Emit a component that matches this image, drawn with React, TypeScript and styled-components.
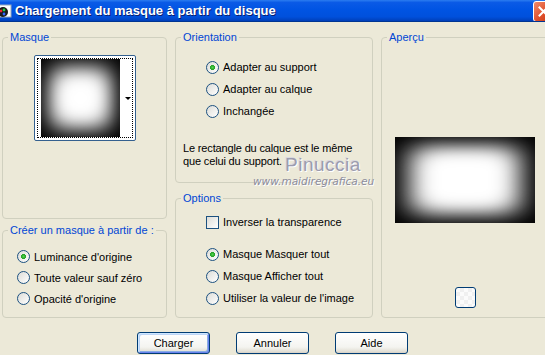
import styled, { createGlobalStyle } from "styled-components";

const GlobalStyle = createGlobalStyle`
    html, body {
        margin: 0;
        padding: 0;
        background: #ece9d8;
    }
    body {
        font-family: "Liberation Sans", Arial, sans-serif;
        font-size: 11px;
        color: #000;
    }
`;

const radioOptions = {
    creer: ["Luminance d'origine", "Toute valeur sauf zéro", "Opacité d'origine"],
    orientation: ["Adapter au support", "Adapter au calque", "Inchangée"],
    options: ["Masque Masquer tout", "Masque Afficher tout", "Utiliser la valeur de l'image"],
};

const Radio = ({ label, checked, rowHeight }: { label: string; checked?: boolean; rowHeight: number }) => (
    <OptionRow rowHeight={rowHeight}>
        <RadioCircle checked={!!checked} />
        <span>{label}</span>
    </OptionRow>
);

const App = () => {
    return (
        <>
            <GlobalStyle />
            <Dialog>
                <TitleBar>
                    <TitleLeft>
                        <svg width="14" height="14" viewBox="0 0 14 14">
                            <rect x="1" y="1" width="12" height="12" fill="#fff" stroke="#9ab" />
                            <circle cx="5" cy="8" r="5" fill="#1a1a1a" />
                            <circle cx="3" cy="7" r="1.4" fill="#e23" />
                            <circle cx="6" cy="6" r="1.4" fill="#2c4" />
                            <circle cx="6" cy="10" r="1.4" fill="#36f" />
                        </svg>
                        <Title>Chargement du masque à partir du disque</Title>
                    </TitleLeft>
                    <CloseButton>
                        <svg width="11" height="11" viewBox="0 0 11 11">
                            <path d="M1.5 1.5 L9.5 9.5 M9.5 1.5 L1.5 9.5" stroke="#fff" strokeWidth="2" strokeLinecap="square" />
                        </svg>
                    </CloseButton>
                </TitleBar>

                <Body>
                    <Columns>
                        <Column width={165} gap={5}>
                            <Group height={188}>
                                <Legend>Masque</Legend>
                                <MaskContent>
                                    <Combo>
                                        <FocusRing>
                                            <svg width="79" height="78" viewBox="0 0 79 78">
                                                <defs>
                                                    <filter id="thumbBlur" x="-50%" y="-50%" width="200%" height="200%">
                                                        <feGaussianBlur stdDeviation="11" />
                                                    </filter>
                                                </defs>
                                                <rect width="79" height="78" fill="#000" />
                                                <rect x="10" y="10" width="59" height="58" fill="#fff" filter="url(#thumbBlur)" />
                                                <rect x="20" y="20" width="39" height="38" fill="#fff" filter="url(#thumbBlur)" />
                                            </svg>
                                            <ArrowArea>
                                                <Arrow />
                                            </ArrowArea>
                                        </FocusRing>
                                    </Combo>
                                </MaskContent>
                            </Group>
                            <Group height={94}>
                                <Legend>Créer un masque à partir de :</Legend>
                                <List padTop={9} padLeft={14}>
                                    {radioOptions.creer.map((o, i) => (
                                        <Radio key={o} label={o} checked={i === 0} rowHeight={21} />
                                    ))}
                                </List>
                            </Group>
                        </Column>

                        <Column width={198} gap={9}>
                            <Group height={152}>
                                <Legend>Orientation</Legend>
                                <List padTop={12} padLeft={30}>
                                    {radioOptions.orientation.map((o, i) => (
                                        <Radio key={o} label={o} checked={i === 0} rowHeight={22} />
                                    ))}
                                </List>
                                <Note>
                                    Le rectangle du calque est le même
                                    <br />
                                    que celui du support.
                                </Note>
                            </Group>
                            <Group height={126}>
                                <Legend>Options</Legend>
                                <List padTop={6} padLeft={30}>
                                    <OptionRow rowHeight={22}>
                                        <CheckBox />
                                        <span>Inverser la transparence</span>
                                    </OptionRow>
                                    <Spacer />
                                    {radioOptions.options.map((o, i) => (
                                        <Radio key={o} label={o} checked={i === 0} rowHeight={22} />
                                    ))}
                                </List>
                            </Group>
                        </Column>

                        <Column width={168} gap={0}>
                            <Group height={287}>
                                <Legend>Aperçu</Legend>
                                <PreviewContent>
                                    <svg width="140" height="86" viewBox="0 0 140 86">
                                        <defs>
                                            <filter id="prevBlur" x="-50%" y="-50%" width="200%" height="200%">
                                                <feGaussianBlur stdDeviation="15 10" />
                                            </filter>
                                        </defs>
                                        <rect width="140" height="86" fill="#000" />
                                        <rect x="16" y="10" width="108" height="66" fill="#fff" filter="url(#prevBlur)" />
                                        <rect x="34" y="20" width="72" height="46" fill="#fff" filter="url(#prevBlur)" />
                                    </svg>
                                    <SmallButton />
                                </PreviewContent>
                            </Group>
                        </Column>
                    </Columns>

                    <ButtonRow>
                        <Button isDefault>Charger</Button>
                        <Button>Annuler</Button>
                        <Button>Aide</Button>
                    </ButtonRow>

                    <Watermark>
                        <WatermarkName>Pinuccia</WatermarkName>
                        <WatermarkUrl>www.maidiregrafica.eu</WatermarkUrl>
                    </Watermark>
                </Body>
            </Dialog>
        </>
    );
};

const Dialog = styled.div`
    width: 545px;
    height: 355px;
    overflow: hidden;
    background: #ece9d8;
    position: relative;
`;

const TitleBar = styled.div`
    height: 22px;
    box-sizing: border-box;
    display: flex;
    align-items: center;
    justify-content: space-between;
    background: linear-gradient(#2b7cf0 0%, #0a5ae6 12%, #0054e3 45%, #0050dc 80%, #003fb8 100%);
    border-bottom: 1px solid #003592;
    overflow: hidden;
`;

const TitleLeft = styled.div`
    display: flex;
    align-items: center;
    gap: 3px;
    margin-left: -2px;
`;

const Title = styled.span`
    color: #fff;
    font-family: "Liberation Sans", Arial, sans-serif;
    font-weight: bold;
    font-size: 13px;
    text-shadow: 1px 1px 0 #0a1e6e;
`;

const CloseButton = styled.div`
    width: 21px;
    height: 21px;
    box-sizing: border-box;
    margin-right: -9px;
    margin-top: 1px;
    border: 1px solid #fff;
    border-radius: 3px;
    background: linear-gradient(135deg, #f08a6c, #e0502c 55%, #c43a16);
    display: flex;
    align-items: center;
    justify-content: center;
`;

const Body = styled.div`
    padding: 9px 0 0 2px;
`;

const Columns = styled.div`
    display: flex;
    gap: 8px;
`;

const Column = styled.div<{ width: number; gap: number }>`
    flex: 0 0 ${(p) => p.width}px;
    display: flex;
    flex-direction: column;
    gap: ${(p) => p.gap}px;
`;

const Group = styled.fieldset<{ height: number }>`
    margin: 0;
    padding: 0;
    min-width: 0;
    box-sizing: border-box;
    height: ${(p) => p.height}px;
    border: 1px solid #d0d0bf;
    border-radius: 4px;
`;

const Legend = styled.legend`
    margin-left: 5px;
    padding: 0 2px;
    line-height: 13px;
    color: #0046d5;
    font-size: 11px;
`;

const MaskContent = styled.div`
    display: flex;
    justify-content: center;
    padding-top: 11px;
`;

const Combo = styled.div`
    width: 102px;
    height: 86px;
    box-sizing: border-box;
    border: 1px solid #34608f;
    border-radius: 2px;
    background: #fff;
    padding: 2px;
`;

const FocusRing = styled.div`
    height: 100%;
    box-sizing: border-box;
    border: 1px dotted #000;
    display: flex;
    padding-left: 3px;
    svg {
        display: block;
    }
`;

const ArrowArea = styled.div`
    flex: 1;
    display: flex;
    align-items: center;
    justify-content: flex-end;
    padding-right: 1px;
`;

const Arrow = styled.div`
    width: 0;
    height: 0;
    border-left: 3px solid transparent;
    border-right: 3px solid transparent;
    border-top: 3px solid #000;
`;

const List = styled.div<{ padTop: number; padLeft: number }>`
    display: flex;
    flex-direction: column;
    padding: ${(p) => p.padTop}px 0 0 ${(p) => p.padLeft}px;
`;

const OptionRow = styled.div<{ rowHeight: number }>`
    height: ${(p) => p.rowHeight}px;
    display: flex;
    align-items: center;
    gap: 4px;
    white-space: nowrap;
`;

const RadioCircle = styled.span<{ checked: boolean }>`
    width: 13px;
    height: 13px;
    box-sizing: border-box;
    flex: none;
    border-radius: 50%;
    border: 1px solid #1c5180;
    background: ${(p) =>
        p.checked
            ? "radial-gradient(circle at 50% 50%, #55d455 0, #21a121 2.2px, transparent 2.8px), linear-gradient(135deg, #dcdcd7, #ffffff)"
            : "linear-gradient(135deg, #dcdcd7, #ffffff)"};
`;

const CheckBox = styled.span`
    width: 13px;
    height: 13px;
    box-sizing: border-box;
    flex: none;
    border: 1px solid #1c5180;
    background: linear-gradient(135deg, #dcdcd7, #ffffff);
`;

const Spacer = styled.div`
    height: 10px;
`;

const Note = styled.p`
    margin: 20px 0 0 7px;
    line-height: 13px;
    letter-spacing: -0.15px;
`;

const PreviewContent = styled.div`
    display: flex;
    flex-direction: column;
    align-items: center;
    padding-top: 93px;
    gap: 64px;
    svg {
        display: block;
    }
`;

const SmallButton = styled.div`
    width: 21px;
    height: 21px;
    box-sizing: border-box;
    border: 1px solid #003c74;
    border-radius: 3px;
    background-color: #fbfbfb;
    background-image: linear-gradient(45deg, #f0f0f0 25%, transparent 25%, transparent 75%, #f0f0f0 75%),
        linear-gradient(45deg, #f0f0f0 25%, transparent 25%, transparent 75%, #f0f0f0 75%);
    background-size: 8px 8px;
    background-position: 0 0, 4px 4px;
`;

const ButtonRow = styled.div`
    display: flex;
    justify-content: center;
    gap: 26px;
    margin-top: 14px;
    padding-right: 2px;
`;

const Button = styled.button<{ isDefault?: boolean }>`
    width: 73px;
    height: 22px;
    box-sizing: border-box;
    padding: 0;
    font-family: "Liberation Sans", Arial, sans-serif;
    font-size: 11px;
    color: #000;
    border: 1px solid #003c74;
    border-radius: 3px;
    background: linear-gradient(#ffffff, #f4f4f0 70%, #e3e0d6 92%, #d6d0c5);
    box-shadow: ${(p) =>
        p.isDefault
            ? "inset 1px 1px 0 #cee7ff, inset -1px -1px 0 #6982ee, inset 2px 2px 0 #bcd4f6, inset -2px -2px 0 #89ade4"
            : "none"};
`;

const Watermark = styled.div`
    position: absolute;
    left: 253px;
    top: 156px;
    display: flex;
    flex-direction: column;
    pointer-events: none;
`;

const WatermarkName = styled.span`
    margin-left: 32px;
    font-family: "Liberation Sans", Arial, sans-serif;
    font-size: 19px;
    letter-spacing: 0.5px;
    color: #9c9cae;
    text-shadow: 1px 1px 0 #fff, -1px -1px 0 #d8d8e0;
    line-height: 17px;
`;

const WatermarkUrl = styled.span`
    margin-top: 2px;
    font-family: "DejaVu Sans", sans-serif;
    font-style: italic;
    font-size: 10.5px;
    color: #8c8c9c;
    text-shadow: 1px 1px 0 #fff;
    line-height: 12px;
`;

export default App;
